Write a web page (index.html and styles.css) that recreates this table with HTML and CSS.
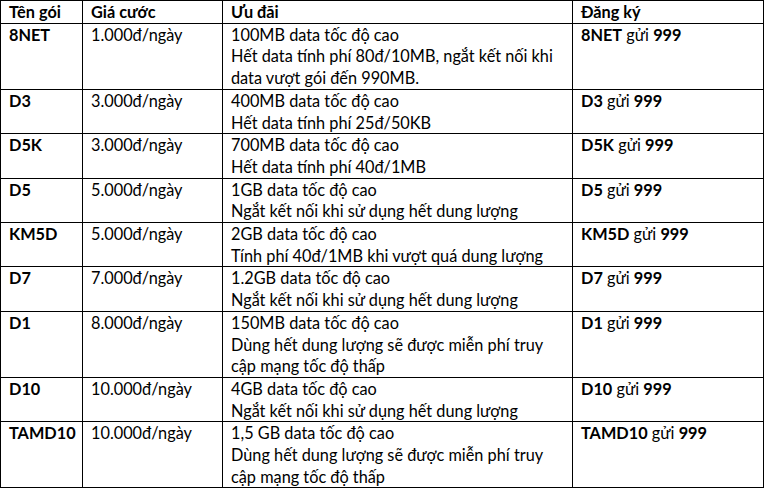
FILE: index.html
```html
<!DOCTYPE html>
<html lang="vi">
<head>
<meta charset="utf-8">
<title>Gói cước data</title>
<link rel="stylesheet" href="styles.css">
</head>
<body>
<table class="plans">
  <colgroup>
    <col class="c-name">
    <col class="c-price">
    <col class="c-offer">
    <col class="c-reg">
  </colgroup>
  <thead>
    <tr><th>Tên gói</th><th>Giá cước</th><th>Ưu đãi</th><th>Đăng ký</th></tr>
  </thead>
  <tbody>
    <tr><td class="name">8NET</td><td>1.000đ/ngày</td><td>100MB data tốc độ cao<br>Hết data tính phí 80đ/10MB, ngắt kết nối khi<br>data vượt gói đến 990MB.</td><td><b>8NET</b> gửi <b>999</b></td></tr>
    <tr><td class="name">D3</td><td>3.000đ/ngày</td><td>400MB data tốc độ cao<br>Hết data tính phí 25đ/50KB</td><td><b>D3</b> gửi <b>999</b></td></tr>
    <tr><td class="name">D5K</td><td>3.000đ/ngày</td><td>700MB data tốc độ cao<br>Hết data tính phí 40đ/1MB</td><td><b>D5K</b> gửi <b>999</b></td></tr>
    <tr><td class="name">D5</td><td>5.000đ/ngày</td><td>1GB data tốc độ cao<br>Ngắt kết nối khi sử dụng hết dung lượng</td><td><b>D5</b> gửi <b>999</b></td></tr>
    <tr><td class="name">KM5D</td><td>5.000đ/ngày</td><td>2GB data tốc độ cao<br>Tính phí 40đ/1MB khi vượt quá dung lượng</td><td><b>KM5D</b> gửi <b>999</b></td></tr>
    <tr><td class="name">D7</td><td>7.000đ/ngày</td><td>1.2GB data tốc độ cao<br>Ngắt kết nối khi sử dụng hết dung lượng</td><td><b>D7</b> gửi <b>999</b></td></tr>
    <tr><td class="name">D1</td><td>8.000đ/ngày</td><td>150MB data tốc độ cao<br>Dùng hết dung lượng sẽ được miễn phí truy<br>cập mạng tốc độ thấp</td><td><b>D1</b> gửi <b>999</b></td></tr>
    <tr><td class="name">D10</td><td>10.000đ/ngày</td><td>4GB data tốc độ cao<br>Ngắt kết nối khi sử dụng hết dung lượng</td><td><b>D10</b> gửi <b>999</b></td></tr>
    <tr><td class="name">TAMD10</td><td>10.000đ/ngày</td><td>1,5 GB data tốc độ cao<br>Dùng hết dung lượng sẽ được miễn phí truy<br>cập mạng tốc độ thấp</td><td><b>TAMD10</b> gửi <b>999</b></td></tr>
  </tbody>
</table>
</body>
</html>
```
FILE: styles.css
```css
html, body {
  margin: 0;
  padding: 0;
  background: #ffffff;
}

body {
  font-family: Lato, "Liberation Sans", Arial, sans-serif;
  font-size: 16.3px;
  color: #000000;
}

.plans {
  border-collapse: collapse;
  table-layout: fixed;
  width: 763px;
}

.c-name { width: 82px; }
.c-price { width: 140px; }
.c-offer { width: 350px; }
.c-reg { width: 191px; }

.plans th,
.plans td {
  border: 1px solid #000000;
  padding: 0 6px 0 8px;
  line-height: 21.7px;
  text-align: left;
  vertical-align: top;
  white-space: nowrap;
  font-weight: 400;
}

.plans th,
.plans td.name,
.plans b {
  font-weight: 700;
}
```
